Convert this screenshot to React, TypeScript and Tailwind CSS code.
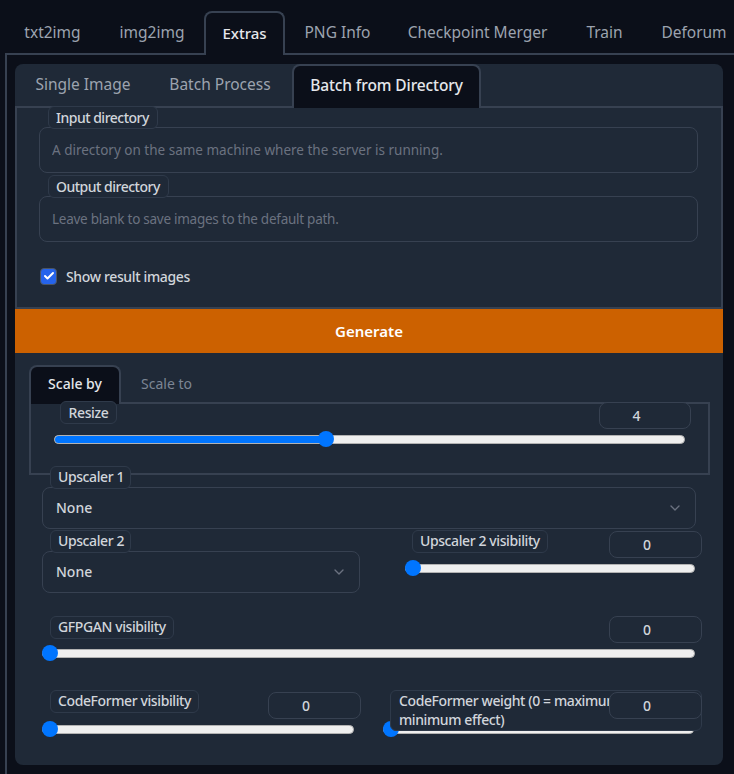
import React from 'react';
import { Check, ChevronDown } from 'lucide-react';

function FloatLabel({ text, className = '' }: { text: string; className?: string }) {
  return (
    <span className={`absolute z-10 h-[23px] rounded-[6px] border border-[#2f3a4a] bg-[#1f2937] px-[7px] text-[14px] leading-[20px] tracking-[-0.4px] font-medium text-[#d1d5db] whitespace-nowrap ${className}`}>
      {text}
    </span>
  );
}

function TextField({ label, placeholder, labelWidth, tight }: { label: string; placeholder: string; labelWidth: string; tight?: boolean }) {
  return (
    <div className="relative pt-[19px]">
      <FloatLabel text={label} className={`left-[31px] top-[-2px] pt-[1px] tracking-[-0.5px] ${labelWidth}`} />
      <div className="ml-[22px] mr-[23px] h-[46px]">
        <input
          readOnly
          placeholder={placeholder}
          className={`h-full w-full rounded-[8px] border border-[#374151] bg-transparent px-[12px] text-[13.5px] text-[#e5e7eb] outline-none placeholder:text-[#6b7280] ${tight ? 'tracking-[-0.26px]' : ''}`}
        />
      </div>
    </div>
  );
}

function NumberBox({ value, className = '' }: { value: string; className?: string }) {
  return (
    <input
      readOnly
      value={value}
      className={`absolute z-20 h-[26.5px] w-[93px] rounded-[8px] border border-[#374151] bg-[#1f2937] pr-[17px] text-center text-[14px] font-medium text-[#d1d5db] outline-none ${className}`}
    />
  );
}

// track and thumb drawn by hand, the native one comes out thinner than the picture
function Slider({ value = 0, min = 0, max = 1 }: { value?: number; min?: number; max?: number }) {
  const pct = (value - min) / (max - min);
  return (
    <div className="relative flex h-[16px] w-full items-center">
      <div className="h-[9px] w-full overflow-hidden rounded-full border border-[#b2b2b2] bg-[#efefef]">
        <div className="-m-[1px] h-[9px] bg-[#0075ff]" style={{ width: `calc(${pct} * (100% - 16px) + ${pct > 0 ? 8 : 0}px)` }} />
      </div>
      <div className="absolute top-0 h-[16px] w-[16px] rounded-full bg-[#0075ff]" style={{ left: `calc(${pct} * (100% - 16px))` }} />
    </div>
  );
}

function SelectBox({ label, labelWidth, className = '' }: { label: string; labelWidth: string; className?: string }) {
  return (
    <div className={`relative pt-[21px] ${className}`}>
      <FloatLabel text={label} className={`left-[8px] top-0 ${labelWidth}`} />
      <div className="flex h-[42px] items-center justify-between rounded-[8px] border border-[#374151] pb-[2px] pl-[13px] pr-[12px] text-[14px] font-medium text-[#d1d5db]">
        <span>None</span>
        <ChevronDown className="mt-[2px] h-[16px] w-[16px] text-[#6b7280]" strokeWidth={2} />
      </div>
    </div>
  );
}

const MAIN_TABS = [
  { name: 'txt2img', width: 'w-[95px]' },
  { name: 'img2img', width: 'w-[104px]' },
  { name: 'Extras', width: 'w-[81px]', active: true },
  { name: 'PNG Info', width: 'w-[105px]' },
  { name: 'Checkpoint Merger', width: 'w-[175px]' },
  { name: 'Train', width: 'w-[79px]' },
  { name: 'Deforum', width: 'w-[100px]' },
];

export default function App() {
  return (
    <div className="h-[774px] w-[734px] overflow-hidden bg-[#0b0f19] font-['Noto_Sans',sans-serif]">
      <div className="flex w-[800px] pl-[5px] pt-[11px]">
        {MAIN_TABS.map(t => (
          <div
            key={t.name}
            className={
              t.active
                ? `relative z-10 -mb-[2px] flex h-[44px] ${t.width} shrink-0 items-center justify-center rounded-t-[8px] border-2 border-b-0 border-[#374151] bg-[#0b0f19] pb-[2px] text-[15px] font-medium text-[#e5e7eb]`
                : `flex h-[42px] ${t.width} shrink-0 items-center justify-center pt-[1px] text-[15.5px] text-[#9ca3af]`
            }
          >
            {t.name}
          </div>
        ))}
      </div>

      <div className="ml-[5px] h-[721px] w-[800px] border-l-2 border-t-2 border-[#374151] pl-[8px] pt-[9px]">
        <div className="h-[701px] w-[708px] overflow-hidden rounded-[8px] bg-[#1f2937]">
          <div className="flex h-[42px] text-[15.5px] text-[#9ca3af]">
            <div className="flex w-[136px] items-center justify-center">Single Image</div>
            <div className="flex w-[138px] items-center justify-center">Batch Process</div>
            <div className="relative z-10 ml-[3px] flex h-[44px] w-[189px] items-center justify-center rounded-t-[8px] border-2 border-b-0 border-[#374151] bg-[#0b0f19] pb-[3px] font-medium tracking-[-0.1px] text-[#e5e7eb]">
              Batch from Directory
            </div>
          </div>

          <div className="h-[203px] border-2 border-[#374151]">
            <TextField label="Input directory" placeholder="A directory on the same machine where the server is running." labelWidth="w-[110px]" />
            <div className="mt-[4px]">
              <TextField label="Output directory" placeholder="Leave blank to save images to the default path." labelWidth="w-[121px]" tight />
            </div>
            <div className="ml-[23px] mt-[23px] flex items-center gap-[9px]">
              <span className="flex h-[17px] w-[17px] items-center justify-center rounded-[4px] border border-[#4b5563] bg-[#2563eb]">
                <Check className="h-[12px] w-[12px] text-white" strokeWidth={4} />
              </span>
              <span className="pt-[1px] text-[14px] font-medium tracking-[-0.35px] text-[#d1d5db]">Show result images</span>
            </div>
          </div>

          <div className="flex h-[44px] items-center justify-center bg-[#cc6100] pt-[1px] text-[15px] font-semibold text-white">Generate</div>

          <div className="mt-[12px] flex h-[37px] pl-[14px] text-[14px]">
            <div className="relative z-10 flex h-[39px] w-[92px] items-center justify-center rounded-t-[8px] border-2 border-b-0 border-[#374151] bg-[#0b0f19] pb-[4px] font-medium text-[#e5e7eb]">
              Scale by
            </div>
            <div className="flex w-[91px] items-center justify-center text-[#7c8594]">Scale to</div>
          </div>

          <div className="relative ml-[14px] h-[73px] w-[681px] border-2 border-[#374151] pl-[23px] pt-[27px]">
            <FloatLabel text="Resize" className="left-[29px] top-[-3px] w-[57px] pt-[1px] text-center" />
            <NumberBox value="4" className="left-[568px] top-[-2px] !w-[92px]" />
            <div className="w-[631px]">
              <Slider value={4} min={1} max={8} />
            </div>
          </div>

          <div className="relative z-10 -mt-[9px] pl-[27px] pr-[27px]">
            <SelectBox label="Upscaler 1" labelWidth="w-[81px]" />

            <div className="mt-[1px] flex">
              <SelectBox label="Upscaler 2" labelWidth="w-[81px]" className="w-[318px]" />
              <div className="relative ml-[45px] h-[64px] w-[290px] pt-[30px]">
                <FloatLabel text="Upscaler 2 visibility" className="left-[7px] top-0" />
                <NumberBox value="0" className="left-[204px] top-[1px]" />
                <Slider />
              </div>
            </div>

            <div className="relative mt-[22px] w-[653px] pt-[29px]">
              <FloatLabel text="GFPGAN visibility" className="left-[8px] top-0" />
              <NumberBox value="0" className="left-[567px] top-0" />
              <Slider />
            </div>

            <div className="mt-[30px] flex">
              <div className="relative w-[312px] pt-[30px]">
                <FloatLabel text="CodeFormer visibility" className="left-[8px] top-[-1px]" />
                <NumberBox value="0" className="left-[226px] top-[1px]" />
                <Slider />
              </div>
              <div className="relative ml-[29px] w-[311px] pt-[30px]">
                <span className="absolute left-[7px] top-[-1px] z-10 h-[41px] w-[312px] overflow-hidden rounded-[6px] border border-[#2f3a4a] bg-[#1f2937] px-[8px] text-[14px] leading-[19px] tracking-[-0.4px] font-medium text-[#d1d5db]">
                  CodeFormer weight (0 = maximum effect, 1 =<br />minimum effect)
                </span>
                <NumberBox value="0" className="left-[226px] top-[1px]" />
                <Slider />
              </div>
            </div>
          </div>
        </div>
      </div>
    </div>
  );
}
